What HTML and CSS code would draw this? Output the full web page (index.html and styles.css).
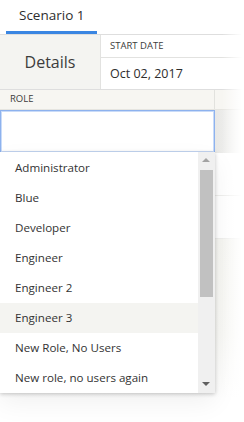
FILE: index.html
```html
<!doctype html>
<html lang="en">
<head>
  <meta charset="UTF-8">
  <title>Scenario</title>
  <link rel="stylesheet" href="styles.css">
</head>
<body>
  <div class="page">
    <div class="tabs">
      <div class="tab on">Scenario 1</div>
    </div>

    <div class="details">
      <div class="details-label">Details</div>
      <div class="details-field">
        <div class="field-head">START DATE</div>
        <div class="field-value">Oct 02, 2017</div>
      </div>
    </div>

    <div class="role-head">
      <div class="role-cell">ROLE</div>
      <div class="role-rest"></div>
    </div>
    <div class="role-row">
      <div class="role-input"></div>
      <div class="role-side"></div>
    </div>
    <div class="under">
      <div class="under-row"></div>
      <div class="under-row"></div>
      <div class="under-shade"></div>
    </div>

    <!-- dropdown opened under the input -->
    <div class="menu">
      <ul class="options">
        <li>Administrator</li>
        <li>Blue</li>
        <li>Developer</li>
        <li>Engineer</li>
        <li>Engineer 2</li>
        <li class="hover">Engineer 3</li>
        <li>New Role, No Users</li>
        <li>New role, no users again</li>
      </ul>
      <div class="scrollbar">
        <span class="arrow up"></span>
        <span class="thumb"></span>
        <span class="arrow down"></span>
      </div>
    </div>

    <div class="fade"></div>
  </div>
</body>
</html>
```
FILE: styles.css
```css
*{margin:0;
  padding:0;
  list-style:none;
  box-sizing:border-box;}
body{font-family:"Open Sans","Noto Sans",sans-serif;
     color:#333;
     background:#fff;}
.page{width:244px;
      height:422px;
      position:relative;
      overflow:hidden;}

/* tab strip */
.tabs{height:35px;
      border-bottom:1px solid #dedede;
      padding-left:6px;
      display:flex;}
.tab{width:91px;
     padding:6px 0 0 13px;
     font-size:13.5px;
     color:#2e2e2e;}
.tab.on{border-bottom:3px solid #3a86e2;}

/* details block */
.details{display:flex;
         height:55px;
         border-bottom:1px solid #dedede;}
.details-label{width:101px;
               background:#f4f4f1;
               border-right:1px solid #e2e2e0;
               font-size:16px;
               display:flex;
               align-items:center;
               justify-content:center;
               color:#3c3c3c;}
.details-field{flex:1;}
.field-head{height:23px;
            border-bottom:1px solid #e2e2e0;
            font-size:9.5px;
            padding:4px 0 0 9px;
            color:#3c3c3c;}
.field-value{font-size:12.5px;
             padding:7px 0 0 9px;
             color:#2e2e2e;}

/* role row */
.role-head{display:flex;
           height:20px;
           background:#f7f6f2;
           border-bottom:1px solid #e6e5e0;}
.role-cell{width:215px;
           border-right:1px solid #e2e2de;
           font-size:9.5px;
           padding:2px 0 0 10px;
           color:#3c3c3c;}
.role-row{display:flex;
          height:43px;}
.role-input{width:215px;
            border:1px solid #8db2ee;
            box-shadow:inset 0 0 0 1px #c9dbf8;
            background:#fff;}
.role-side{flex:1;
           background:linear-gradient(to right,#e8e8e6,#f6f6f4);}

.under-row{height:43px;
           border-bottom:1px solid #eeeeec;}
.under-shade{height:160px;
             background:linear-gradient(#f5f5f1,#f8f8f5 60%,#fff);}

/* dropdown */
.menu{position:absolute;
      left:0;
      top:152px;
      width:215px;
      height:241px;
      background:#fff;
      display:flex;
      box-shadow:0 1px 4px rgba(0,0,0,.22),0 10px 24px rgba(0,0,0,.06);}
.options{flex:1;
         padding-top:1px;}
.options li{height:30px;
            line-height:30px;
            padding-left:15px;
            font-size:11.6px;
            color:#333;
            white-space:nowrap;}
.options li.hover{background:#f4f4f1;}
.scrollbar{width:17px;
           background:#f0f0f0;
           position:relative;}
.scrollbar .thumb{position:absolute;
                  left:2px;
                  right:2px;
                  top:18px;
                  height:127px;
                  background:#c1c1c1;}
.scrollbar .arrow{position:absolute;
                  left:4px;
                  width:0;
                  height:0;
                  border-left:4px solid transparent;
                  border-right:4px solid transparent;}
.scrollbar .up{top:6px;
               border-bottom:4px solid #a3a3a3;}
.scrollbar .down{bottom:7px;
                 border-top:4px solid #606060;}

/* right edge fade */
.fade{position:absolute;
      top:0;
      right:0;
      width:22px;
      height:100%;
      background:linear-gradient(to right,rgba(255,255,255,0),#fff 90%);}
```
